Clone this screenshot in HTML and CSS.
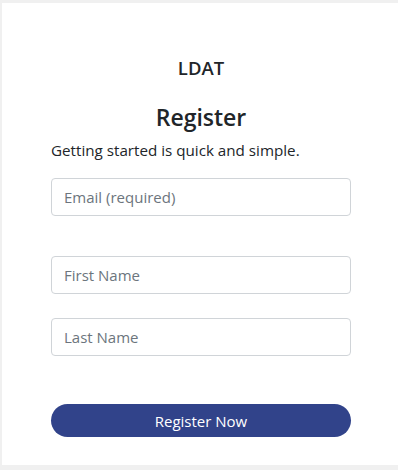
FILE: index.html
```html
<!DOCTYPE html>
<html lang="en">
<head>
<meta charset="utf-8">
<title>LDAT - Register</title>
<link rel="stylesheet" href="styles.css">
</head>
<body>
<main class="card">
  <div class="column">
    <div class="brand">LDAT</div>
    <h1 class="title">Register</h1>
    <p class="lead">Getting started is quick and simple.</p>
    <form class="form">
      <input class="field field-email" type="email" placeholder="Email (required)">
      <input class="field field-first" type="text" placeholder="First Name">
      <input class="field field-last" type="text" placeholder="Last Name">
      <button class="submit" type="button">Register Now</button>
    </form>
  </div>
</main>
</body>
</html>
```
FILE: styles.css
```css
html, body {
  margin: 0;
  padding: 0;
}
body {
  background: #f0f0f0;
  font-family: "Open Sans", "Noto Sans", "Liberation Sans", sans-serif;
  color: #212529;
  height: 470px;
  overflow: hidden;
}
.card {
  background: #ffffff;
  margin: 3px 0 0 2px;
  height: 462px;
  padding-top: 51px;
  box-sizing: border-box;
}
.column {
  width: 300px;
  margin-left: 49px;
}
.brand {
  text-align: center;
  font-size: 18.5px;
  font-weight: 600;
  line-height: 28px;
  margin: 0;
}
.title {
  text-align: center;
  font-size: 23px;
  font-weight: 600;
  line-height: 30px;
  margin: 20px 0 0;
}
.lead {
  font-size: 15.2px;
  line-height: 22px;
  margin: 7px 0 0;
}
.form {
  display: flex;
  flex-direction: column;
  margin-top: 17px;
}
.field {
  box-sizing: border-box;
  height: 38px;
  width: 300px;
  border: 1px solid #d0d4d8;
  border-radius: 4px;
  padding: 0 12px;
  font-family: inherit;
  font-size: 15px;
  color: #495057;
  background: #fff;
  margin: 0;
  outline: none;
}
.field::placeholder {
  color: #6c757d;
}
.field-first {
  margin-top: 40px;
}
.field-last {
  margin-top: 24px;
}
.submit {
  margin-top: 48px;
  height: 33px;
  width: 300px;
  border: none;
  border-radius: 17px;
  background: #31438a;
  color: #ffffff;
  font-family: inherit;
  font-size: 15px;
  padding: 0;
}
```
